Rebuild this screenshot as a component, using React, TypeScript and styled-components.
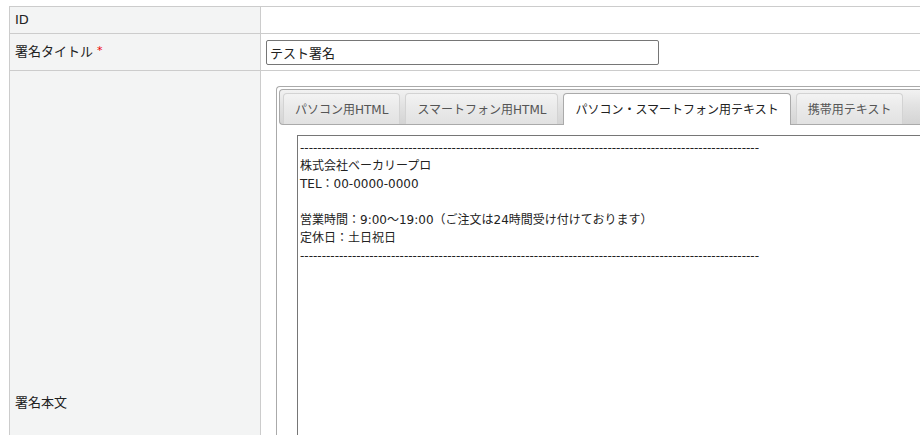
import React from "react";
import styled, { createGlobalStyle } from "styled-components";

const Global = createGlobalStyle`
  html, body { margin: 0; padding: 0; overflow: hidden; background: #fff; }
  body { font-family: "DejaVu Sans", "Noto Sans CJK JP", sans-serif; color: #222; }
`;

const Page = styled.div`
  padding: 6px 0 0 9px;
  width: 1200px;
`;

const Table = styled.table`
  border-collapse: collapse;
  width: 1100px;
  font-size: 13px;
`;

const Row = styled.tr<{ $h: number }>`
  height: ${(p) => p.$h}px;
`;

const Label = styled.th`
  width: 240px;
  background: #f3f4f4;
  border: 1px solid #cccccc;
  text-align: left;
  font-weight: normal;
  padding: 0 5px;
  vertical-align: middle;
  line-height: 18px;
`;

const Cell = styled.td<{ $pad?: string }>`
  border: 1px solid #cccccc;
  padding: ${(p) => p.$pad ?? "0 5px"};
  vertical-align: middle;
`;

const Required = styled.span`
  color: #e00;
  font-size: 11px;
  margin-left: 4px;
  position: relative;
  top: -2px;
`;

const TextInput = styled.input`
  box-sizing: border-box;
  width: 393px;
  height: 25px;
  border: 1px solid #767676;
  border-radius: 2px;
  padding: 0 3px;
  font-family: inherit;
  font-size: 13px;
  color: #222;
  display: block;
`;

const Tabs = styled.div`
  border: 1px solid #aaaaaa;
  border-radius: 4px;
  padding: 2px;
  border-right: none;
  border-top-right-radius: 0;
`;

const TabNav = styled.div`
  display: flex;
  align-items: flex-end;
  gap: 5px;
  height: 32px;
  padding: 2px 0 0 3px;
  border: 1px solid #aaaaaa;
  border-right: none;
  border-radius: 4px 0 0 4px;
  background: linear-gradient(#f2f2f2 0%, #e2e2e2 45%, #d4d4d4 100%);
`;

const Tab = styled.div<{ $active?: boolean }>`
  box-sizing: border-box;
  height: ${(p) => (p.$active ? "32px" : "31px")};
  margin-bottom: ${(p) => (p.$active ? "-1px" : "0")};
  padding: 0 11px;
  display: flex;
  align-items: center;
  font-size: 12px;
  white-space: nowrap;
  border: 1px solid ${(p) => (p.$active ? "#aaaaaa" : "#d3d3d3")};
  border-bottom: none;
  border-radius: 4px 4px 0 0;
  color: ${(p) => (p.$active ? "#212121" : "#555555")};
  background: ${(p) =>
    p.$active ? "#ffffff" : "linear-gradient(#f3f3f3 0%, #e9e9e9 50%, #e2e2e2 100%)"};
  padding-bottom: ${(p) => (p.$active ? "2px" : "1px")};
`;

const Panel = styled.div`
  padding: 10px 0 0 18px;
`;

const Body = styled.textarea`
  box-sizing: border-box;
  display: block;
  width: 760px;
  height: 582px;
  border: 1px solid #767676;
  border-right: none;
  padding: 3px 2px 2px;
  margin: 0;
  resize: none;
  font-family: "DejaVu Sans", "Noto Sans CJK JP", sans-serif;
  font-size: 12px;
  line-height: 18px;
  color: #222;
  overflow: hidden;
  outline: none;
`;

const dashes = "-".repeat(106);
const bodyText = `${dashes}
株式会社ベーカリープロ
TEL：00-0000-0000

営業時間：9:00〜19:00（ご注文は24時間受け付けております）
定休日：土日祝日
${dashes}`;

const tabs = [
  "パソコン用HTML",
  "スマートフォン用HTML",
  "パソコン・スマートフォン用テキスト",
  "携帯用テキスト",
];

export default function App() {
  return (
    <>
      <Global />
      <Page>
        <Table>
          <tbody>
            <Row $h={27}>
              <Label>ID</Label>
              <Cell />
            </Row>
            <Row $h={37}>
              <Label>
                署名タイトル<Required>*</Required>
              </Label>
              <Cell>
                <TextInput defaultValue="テスト署名" />
              </Cell>
            </Row>
            <Row $h={664}>
              <Label>署名本文</Label>
              <Cell $pad="15px 0 15px 15px">
                <Tabs>
                  <TabNav>
                    {tabs.map((t, i) => (
                      <Tab key={t} $active={i === 2}>
                        {t}
                      </Tab>
                    ))}
                  </TabNav>
                  <Panel>
                    <Body defaultValue={bodyText} spellCheck={false} />
                  </Panel>
                </Tabs>
              </Cell>
            </Row>
          </tbody>
        </Table>
      </Page>
    </>
  );
}
